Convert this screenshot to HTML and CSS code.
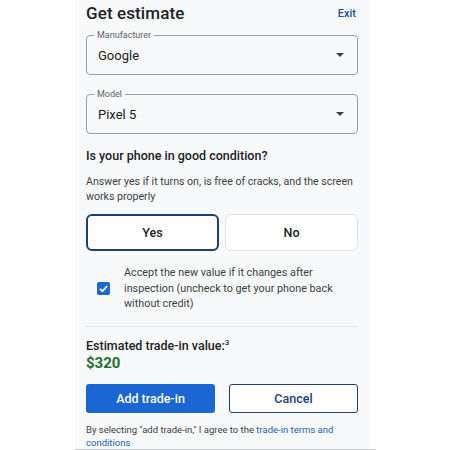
FILE: index.html
```html
<!DOCTYPE html>
<html>
<head>
<meta charset="utf-8">
<link rel="stylesheet" href="styles.css">
</head>
<body>
<div class="panel">
  <div class="header">
    <h1 class="title">Get estimate</h1>
    <a class="exit">Exit</a>
  </div>
  <div class="field">
    <span class="label">Manufacturer</span>
    <span class="value">Google</span>
    <span class="arrow"></span>
  </div>
  <div class="field field2">
    <span class="label">Model</span>
    <span class="value">Pixel 5</span>
    <span class="arrow"></span>
  </div>
  <h2 class="question">Is your phone in good condition?</h2>
  <p class="desc">Answer yes if it turns on, is free of cracks, and the screen works properly</p>
  <div class="choices">
    <div class="choice selected">Yes</div>
    <div class="choice">No</div>
  </div>
  <div class="accept">
    <span class="checkbox">
      <svg width="13" height="13" viewBox="0 0 13 13"><path d="M3 6.8 L5.4 9.1 L10.2 4" fill="none" stroke="#fff" stroke-width="1.8"/></svg>
    </span>
    <span class="accept-text">Accept the new value if it changes after inspection (uncheck to get your phone back without credit)</span>
  </div>
  <div class="divider"></div>
  <div class="est-label">Estimated trade-in value:<sup>3</sup></div>
  <div class="price">$320</div>
  <div class="actions">
    <div class="btn primary">Add trade-in</div>
    <div class="btn secondary">Cancel</div>
  </div>
  <p class="legal">By selecting "add trade-in," I agree to the <a class="link">trade-in terms and conditions</a></p>
</div>
<div class="bottom-line"></div>
</body>
</html>
```
FILE: styles.css
```css
html, body {
  margin: 0;
  padding: 0;
  background: #ffffff;
  width: 450px;
  height: 450px;
  overflow: hidden;
}
body {
  font-family: Roboto, "Noto Sans", Arial, sans-serif;
  color: #202124;
  position: relative;
}
.panel {
  margin-left: 75px;
  width: 294px;
  height: 449px;
  box-sizing: border-box;
  padding: 0 11px;
  background: #f8f9fa;
}
.header {
  display: flex;
  justify-content: space-between;
  align-items: center;
  height: 26px;
}
.title {
  margin: 0;
  font-size: 17px;
  font-weight: 500;
  color: #202124;
  letter-spacing: 0.1px;
}
.exit {
  font-size: 11px;
  font-weight: 500;
  color: #1a4f9c;
  margin-right: 2px;
}
.field {
  position: relative;
  margin-top: 9px;
  height: 40px;
  border: 1px solid #9aa0a6;
  border-radius: 4px;
  box-sizing: border-box;
  display: flex;
  align-items: center;
  padding: 0 11px;
}
.field2 {
  margin-top: 19px;
}
.label {
  position: absolute;
  top: -7px;
  left: 7px;
  padding: 0 3px;
  background: #f8f9fa;
  font-size: 9px;
  color: #5f6368;
  line-height: 12px;
}
.value {
  font-size: 13px;
  color: #202124;
  flex: 1;
}
.arrow {
  width: 0;
  height: 0;
  border-left: 4px solid transparent;
  border-right: 4px solid transparent;
  border-top: 4px solid #3c4043;
  margin-right: 2px;
}
.question {
  margin: 14px 0 0;
  font-size: 12.5px;
  font-weight: 500;
  line-height: 16px;
}
.desc {
  margin: 10px 0 0;
  font-size: 10.6px;
  line-height: 15px;
  color: #3c4043;
}
.choices {
  display: grid;
  grid-template-columns: 1fr 1fr;
  gap: 6px;
  margin-top: 10px;
}
.choice {
  height: 37px;
  box-sizing: border-box;
  border: 1px solid #e0e3e7;
  border-radius: 6px;
  background: #ffffff;
  display: flex;
  align-items: center;
  justify-content: center;
  font-size: 12.5px;
  font-weight: 500;
  color: #202124;
}
.choice.selected {
  border: 2px solid #1c3f78;
}
.accept {
  display: flex;
  align-items: center;
  margin-top: 14px;
  padding-left: 11px;
}
.checkbox {
  width: 13px;
  height: 13px;
  background: #1a66d2;
  border-radius: 2px;
  display: flex;
  flex-shrink: 0;
}
.accept-text {
  margin-left: 14px;
  font-size: 10.8px;
  line-height: 15.5px;
  color: #3c4043;
  width: 215px;
}
.divider {
  height: 1px;
  background: #e3e5e8;
  margin-top: 14px;
}
.est-label {
  margin-top: 8px;
  font-size: 12.5px;
  font-weight: 500;
  line-height: 16px;
}
.est-label sup {
  font-size: 8px;
}
.price {
  font-size: 15px;
  font-weight: 700;
  color: #1e6f30;
  line-height: 19px;
  margin-top: 0;
}
.actions {
  display: grid;
  grid-template-columns: 129px 129px;
  justify-content: space-between;
  margin-top: 11px;
}
.btn {
  height: 29px;
  box-sizing: border-box;
  border-radius: 3px;
  display: flex;
  align-items: center;
  justify-content: center;
  font-size: 12.5px;
  font-weight: 500;
}
.primary {
  background: #1a66d2;
  color: #ffffff;
}
.secondary {
  background: #ffffff;
  border: 1.5px solid #1c3f78;
  color: #1c3f78;
}
.legal {
  margin: 10px 0 0;
  font-size: 9.5px;
  line-height: 13px;
  color: #3c4043;
}
.link {
  color: #1a5fb4;
}
.bottom-line {
  position: absolute;
  left: 75px;
  top: 449px;
  width: 301px;
  height: 1px;
  background: #c5c7ca;
}
```
